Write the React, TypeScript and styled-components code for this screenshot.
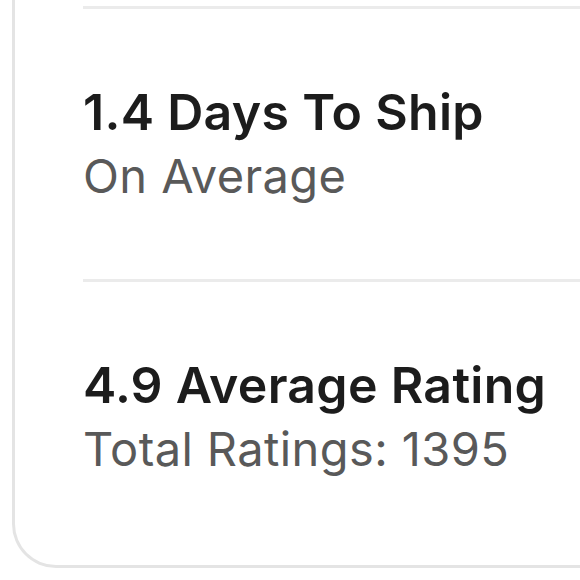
import { createGlobalStyle } from "styled-components";
import styled from "styled-components";

const GlobalStyle = createGlobalStyle`
  html, body {
    margin: 0;
    padding: 0;
    background: #ffffff;
    overflow: hidden;
  }
  body {
    font-family: Inter, "Noto Sans", sans-serif;
    -webkit-font-smoothing: antialiased;
  }
`;

const Card = styled.div`
  margin-left: 12px;
  border: 3px solid #e4e4e4;
  border-top: none;
  border-right: none;
  border-radius: 0 0 0 44px;
  padding: 6px 0 86px 68px;
  background: #ffffff;
`;

const Stat = styled.section`
  border-top: 3px solid #ebebeb;
  padding: 73px 0 73px 0;

  &:last-child {
    padding-bottom: 0;
  }
`;

const Title = styled.h3`
  margin: 0;
  font-size: 50px;
  line-height: 60px;
  font-weight: 600;
  color: #1c1c1c;
  letter-spacing: 0.3px;
  white-space: nowrap;
`;

const Caption = styled.p`
  margin: 4px 0 0;
  font-size: 47px;
  line-height: 60px;
  font-weight: 400;
  color: #595959;
  letter-spacing: 0.4px;
  white-space: nowrap;
`;

const stats = [
  { title: "1.4 Days To Ship", caption: "On Average" },
  { title: "4.9 Average Rating", caption: "Total Ratings: 1395" },
];

export default function App() {
  return (
    <>
      <GlobalStyle />
      <Card>
        {stats.map((s) => (
          <Stat key={s.title}>
            <Title>{s.title}</Title>
            <Caption>{s.caption}</Caption>
          </Stat>
        ))}
      </Card>
    </>
  );
}
